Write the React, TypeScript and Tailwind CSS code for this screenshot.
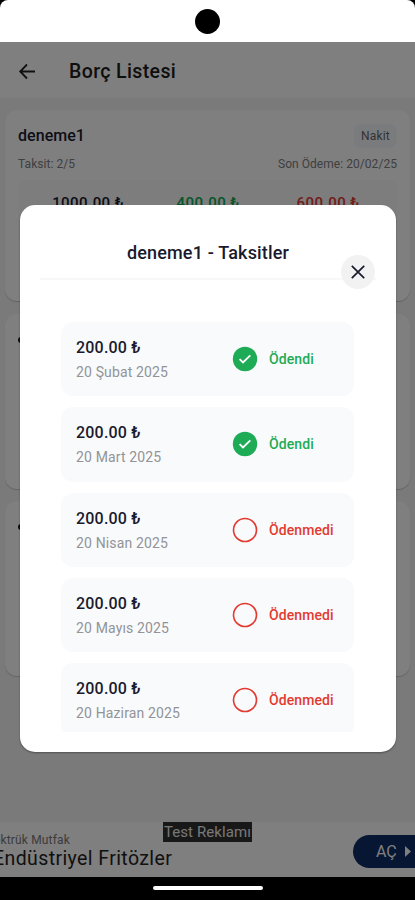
import React from 'react';

type Installment = { amount: string; date: string; paid: boolean };

const installments: Installment[] = [
  { amount: '200.00 ₺', date: '20 Şubat 2025', paid: true },
  { amount: '200.00 ₺', date: '20 Mart 2025', paid: true },
  { amount: '200.00 ₺', date: '20 Nisan 2025', paid: false },
  { amount: '200.00 ₺', date: '20 Mayıs 2025', paid: false },
  { amount: '200.00 ₺', date: '20 Haziran 2025', paid: false },
];

function StatusBar() {
  return (
    <div className="bg-black">
      <div className="flex h-[42px] items-center justify-center rounded-t-[8px] bg-white">
        <div className="size-[25px] rounded-full bg-black" />
      </div>
    </div>
  );
}

function Header() {
  return (
    <header className="flex h-14 items-center bg-white pl-[18px] pt-[3px]">
      <svg width="18" height="18" viewBox="0 0 18 18" fill="none" stroke="#222" strokeWidth="1.8">
        <path d="M17 8.5H2.5M9 1.5L2.2 8.5L9 15.5" />
      </svg>
      <h1 className="ml-[33px] text-[19.5px] font-medium leading-6 tracking-[0.38px] text-[#1c1c1c]">Borç Listesi</h1>
    </header>
  );
}

function DebtCard() {
  return (
    <section className="h-[191px] rounded-xl bg-white px-[13px] pt-[15px] shadow-[0_1px_1px_rgba(0,0,0,0.18)]">
      <div className="flex h-[22px] items-center justify-between">
        <h2 className="text-[16px] font-medium tracking-[0.05px] text-[#1a1a2e]">deneme1</h2>
        <span className="rounded-lg bg-[#f5f7fa] px-[7px] py-[4px] text-[12px] leading-4 tracking-[0.2px] text-[#666]">Nakit</span>
      </div>
      <div className="mt-[9px] flex justify-between text-[12px] leading-4 text-[#808080]">
        <span className="tracking-[0.05px]">Taksit: 2/5</span>
        <span className="tracking-[0.05px]">Son Ödeme: 20/02/25</span>
      </div>
      <div className="mt-[8px] flex h-16 rounded-lg bg-[#fafafa] pl-[10px] pt-[13px] text-[15px] font-medium leading-5 tracking-[0.45px]">
        <span className="w-[120px] text-center text-[#1a1a2e]">1000.00 ₺</span>
        <span className="w-[120px] text-center text-[#0caa54]">400.00 ₺</span>
        <span className="w-[120px] text-center text-[#e53935]">600.00 ₺</span>
      </div>
    </section>
  );
}

function CoveredCard() {
  return (
    <section className="h-[175px] rounded-xl bg-white px-[13px] pt-[14px] shadow-[0_1px_1px_rgba(0,0,0,0.18)]">
      <div className="mt-[9px] h-[6px] w-[3px] rounded-l-full bg-[#1a1a2e]" />
    </section>
  );
}

function AdBanner() {
  return (
    <aside className="flex h-[55px] overflow-hidden bg-white">
      <div className="-ml-[6px] w-[169px] shrink-0 whitespace-nowrap pt-[11px]">
        <p className="text-[12px] leading-[14px] tracking-[0.15px] text-[#777]">ektrük Mutfak</p>
        <p className="-ml-px text-[19.5px] leading-[23px] tracking-[0.4px] text-[#222]">Endüstriyel Fritözler</p>
      </div>
      <div className="h-5 w-[89px] shrink-0 whitespace-nowrap bg-[#303030] text-center text-[15px] leading-5 tracking-[0.1px] text-[#eee]">
        Test Reklamı
      </div>
      <div className="ml-auto mt-[13px] flex h-[33px] w-[62px] items-center rounded-l-full bg-[#0c2c66] pl-[23px] text-[16px] text-white">
        AÇ
        <svg className="ml-[8px]" width="6" height="11" viewBox="0 0 6 11" fill="white">
          <path d="M0 0L6 5.5L0 11Z" />
        </svg>
      </div>
    </aside>
  );
}

function PaymentStatus({ paid }: { paid: boolean }) {
  return (
    <div className="flex w-[106px] items-center">
      <svg width="26" height="26" viewBox="0 0 26 26" fill="none">
        {paid ? (
          <>
            <circle cx="13" cy="13" r="12.2" fill="#1eab56" />
            <path d="M7.6 13.2L11 16.5L18.3 9.4" stroke="white" strokeWidth="1.8" />
          </>
        ) : (
          <circle cx="13" cy="13" r="11.5" stroke="#e23a30" strokeWidth="1.6" />
        )}
      </svg>
      <span className={`ml-[11px] text-[14px] font-medium leading-5 tracking-[0.1px] ${paid ? 'text-[#1eab56]' : 'text-[#e23a30]'}`}>
        {paid ? 'Ödendi' : 'Ödenmedi'}
      </span>
    </div>
  );
}

function InstallmentRow({ item }: { item: Installment }) {
  return (
    <li className="flex h-[74.4px] shrink-0 items-center justify-between rounded-xl bg-[#f9fafc] pl-[15px] pr-[16px]">
      <div className="whitespace-nowrap pt-px">
        <p className="text-[16px] font-medium leading-[22px] tracking-[0.2px] text-[#1a1a2e]">{item.amount}</p>
        <p className="mt-[3px] text-[14px] leading-5 tracking-[0.14px] text-[#929497]">{item.date}</p>
      </div>
      <PaymentStatus paid={item.paid} />
    </li>
  );
}

function InstallmentsDialog() {
  return (
    <div role="dialog" className="relative mt-[163px] flex h-[547px] w-[376px] flex-col rounded-[15px] bg-white px-5 shadow-[0_1px_2px_rgba(0,0,0,0.35)]">
      <div className="flex h-[75px] items-center justify-center border-b-2 border-[#f8f8f9] pt-[23px]">
        <h2 className="text-[18px] font-medium leading-6 tracking-[0.17px] text-[#1a1a2e]">deneme1 - Taksitler</h2>
      </div>
      <ul className="ml-[21px] mt-[42px] flex h-[410px] w-[293px] flex-col gap-[10.9px] overflow-hidden">
        {installments.map((item) => (
          <InstallmentRow key={item.date} item={item} />
        ))}
      </ul>
      <button aria-label="Kapat" className="absolute right-[21px] top-[50px] flex size-[34px] items-center justify-center rounded-full bg-[#f2f2f3]">
        <svg width="14" height="14" viewBox="0 0 14 14" stroke="#1a1a2e" strokeWidth="1.7">
          <path d="M.8 .8L13.2 13.2M13.2 .8L.8 13.2" />
        </svg>
      </button>
    </div>
  );
}

export default function App() {
  return (
    <div className="flex h-[900px] w-[415px] flex-col overflow-hidden bg-black font-['Roboto','Noto_Sans',sans-serif]">
      <StatusBar />
      <div className="relative flex h-[835px] flex-col">
        <Header />
        <main className="flex grow flex-col gap-[12.5px] bg-[#f4f4f4] px-[5px] pt-[12px]">
          <DebtCard />
          <CoveredCard />
          <CoveredCard />
        </main>
        <AdBanner />
        <div className="absolute inset-0 flex items-start bg-black/50 pl-5">
          <InstallmentsDialog />
        </div>
      </div>
      <div className="flex grow justify-center pt-[9px]">
        <div className="h-[4px] w-[110px] rounded-full bg-white" />
      </div>
    </div>
  );
}
